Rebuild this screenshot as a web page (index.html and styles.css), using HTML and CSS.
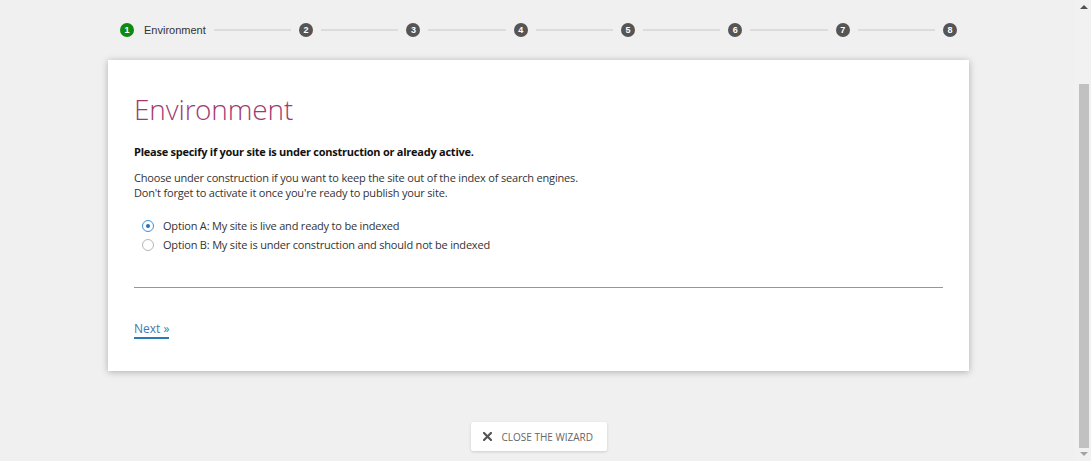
FILE: index.html
```html
<!DOCTYPE html>
<html lang="en">
<head>
<meta charset="utf-8">
<title>Wizard - Environment</title>
<link rel="stylesheet" href="styles.css">
</head>
<body>
<div class="page">
  <div class="wrap">
    <ol class="stepper">
      <li class="step done"><span class="dot">1</span><span class="step-label">Environment</span></li>
      <li class="line"></li>
      <li class="step"><span class="dot">2</span></li>
      <li class="line"></li>
      <li class="step"><span class="dot">3</span></li>
      <li class="line"></li>
      <li class="step"><span class="dot">4</span></li>
      <li class="line"></li>
      <li class="step"><span class="dot">5</span></li>
      <li class="line"></li>
      <li class="step"><span class="dot">6</span></li>
      <li class="line"></li>
      <li class="step"><span class="dot">7</span></li>
      <li class="line"></li>
      <li class="step"><span class="dot">8</span></li>
    </ol>

    <section class="card">
      <h1 class="title">Environment</h1>
      <p class="lead">Please specify if your site is under construction or already active.</p>
      <p class="desc">Choose under construction if you want to keep the site out of the index of search engines.<br>Don't forget to activate it once you're ready to publish your site.</p>
      <div class="options">
        <label class="option"><span class="radio checked"></span>Option A: My site is live and ready to be indexed</label>
        <label class="option"><span class="radio"></span>Option B: My site is under construction and should not be indexed</label>
      </div>
      <div class="divider"></div>
      <a class="next" href="#">Next »</a>
    </section>

    <div class="close-row">
      <button class="close-btn" type="button">
        <svg class="x-icon" width="9" height="9" viewBox="0 0 9 9"><path d="M1 1 L8 8 M8 1 L1 8" stroke="#555" stroke-width="2.2" stroke-linecap="square" fill="none"/></svg>
        <span>Close the wizard</span>
      </button>
    </div>
  </div>
</div>

<div class="scrollbar">
  <span class="arrow up"></span>
  <span class="thumb"></span>
  <span class="arrow down"></span>
</div>
</body>
</html>
```

FILE: styles.css
```css
* { box-sizing: border-box; }

html, body {
  margin: 0;
  padding: 0;
  height: 100%;
  overflow: hidden;
}

body {
  background: #f0f0f0;
  font-family: "Open Sans", "Noto Sans", sans-serif;
  color: #222;
}

.page {
  padding-right: 17px;
}

.wrap {
  width: 861px;
  margin-left: 108px;
}

/* Stepper */
.stepper {
  list-style: none;
  margin: 0 12px;
  padding: 23px 0 0;
  display: flex;
  align-items: center;
  height: 37px;
}

.step {
  display: flex;
  align-items: center;
}

.dot {
  width: 14px;
  height: 14px;
  border-radius: 50%;
  background: #555;
  color: #fff;
  font: bold 9px/14px "Liberation Sans", Arial, sans-serif;
  text-align: center;
  flex: none;
}

.step.done .dot {
  background: #0f8a10;
}

.step-label {
  margin-left: 10px;
  font: 11px/14px "Liberation Sans", Arial, sans-serif;
  color: #333;
  white-space: nowrap;
}

.line {
  flex: 1;
  height: 2px;
  background: #dcdcdc;
  margin: 0 8px;
}

/* Card */
.card {
  margin-top: 23px;
  background: #fff;
  padding: 31px 26px 32px;
  box-shadow: 0 1px 7px rgba(0, 0, 0, 0.28);
}

.title {
  margin: 0;
  font-family: "Open Sans Light", "Open Sans", sans-serif;
  font-weight: 300;
  font-size: 28px;
  line-height: 36px;
  letter-spacing: -0.1px;
  color: #a23a71;
}

.lead {
  margin: 17px 0 0;
  font-size: 11px;
  line-height: 15px;
  font-weight: 700;
  letter-spacing: -0.25px;
  color: #111;
}

.desc {
  margin: 11px 0 0;
  font-size: 11px;
  line-height: 15px;
  letter-spacing: -0.18px;
  color: #333;
}

.options {
  margin-top: 16px;
  padding-left: 8px;
}

.option {
  display: flex;
  align-items: center;
  font-size: 11px;
  line-height: 19px;
  letter-spacing: -0.19px;
  color: #333;
}

.radio {
  width: 12px;
  height: 12px;
  border-radius: 50%;
  border: 1px solid #b5b5b5;
  margin-right: 9px;
  flex: none;
  display: flex;
  align-items: center;
  justify-content: center;
}

.radio.checked {
  border-color: #3d8fd6;
}

.radio.checked::after {
  content: "";
  width: 4px;
  height: 4px;
  border-radius: 50%;
  background: #2a6fb5;
}

.divider {
  margin-top: 33px;
  height: 0;
  border-top: 1px solid #c97aa2;
}

.next {
  display: inline-block;
  margin-top: 33px;
  font-size: 12px;
  line-height: 15px;
  color: #3b7cb2;
  text-decoration: none;
  border-bottom: 2px solid #2a7ab8;
  padding-bottom: 1px;
}

/* Close button */
.close-row {
  display: flex;
  justify-content: center;
  margin-top: 51px;
}

.close-btn {
  display: flex;
  align-items: center;
  gap: 10px;
  height: 29px;
  width: 136px;
  padding: 0 12px;
  background: #fff;
  border: 0;
  border-radius: 2px;
  box-shadow: 0 1px 3px rgba(0, 0, 0, 0.15);
  font-family: "Open Sans", sans-serif;
  font-size: 10px;
  color: #666;
  text-transform: uppercase;
  cursor: pointer;
}

/* Fake browser scrollbar */
.scrollbar {
  position: fixed;
  top: 0;
  right: 0;
  width: 17px;
  height: 100%;
  background: #f1f1f1;
}

.thumb {
  position: absolute;
  left: 5px;
  width: 10px;
  top: 84px;
  height: 364px;
  background: #c1c1c1;
}

.arrow {
  position: absolute;
  left: 6px;
  width: 0;
  height: 0;
  border-left: 4px solid transparent;
  border-right: 4px solid transparent;
}

.arrow.up {
  top: 5px;
  border-bottom: 4px solid #505050;
}

.arrow.down {
  bottom: 5px;
  border-top: 4px solid #a3a3a3;
}
```
